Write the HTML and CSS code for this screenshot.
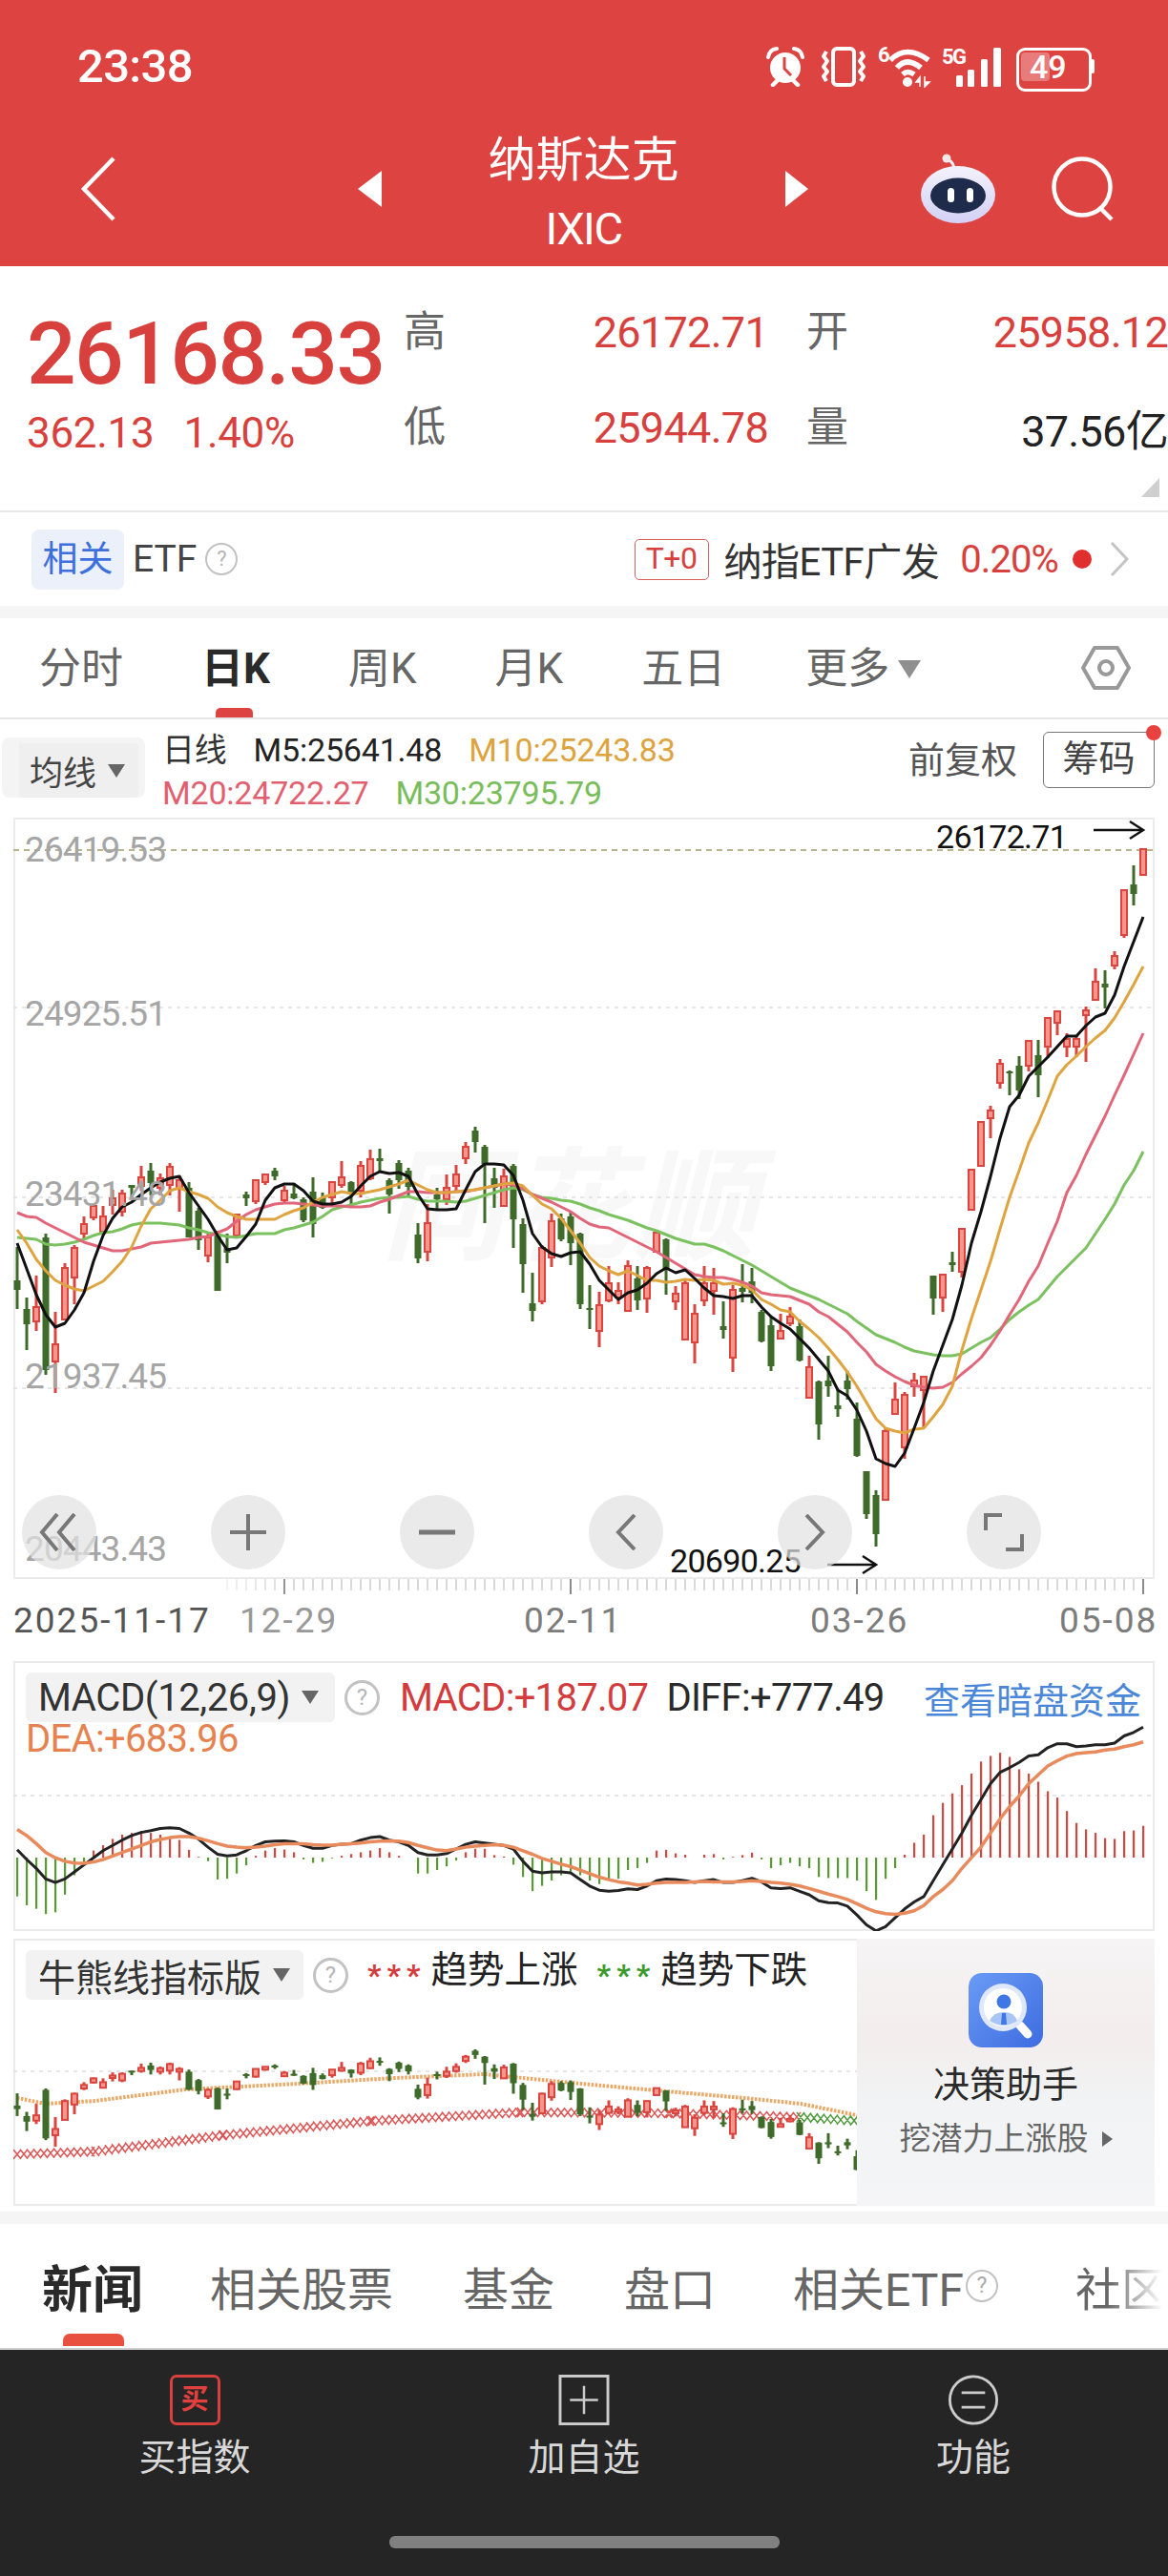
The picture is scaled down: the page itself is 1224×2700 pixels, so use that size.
FILE: index.html
```html
<!DOCTYPE html>
<html lang="zh">
<head>
    <meta charset="UTF-8">
    <meta name="viewport" content="width=device-width, initial-scale=1.0">
    <title>纳斯达克 IXIC</title>
    <link rel="stylesheet" href="styles.css">
</head>
<body>

<!-- 顶部红色区域 -->
<header class="top">
    <div class="status">
        <span class="time">23:38</span>
        <div class="status-icons">
            <svg class="ic-alarm" width="40" height="42" viewBox="0 0 40 42">
                <circle cx="20" cy="22" r="16" fill="#fff"/>
                <path d="M19 11v12l7 7" fill="none" stroke="#dd4441" stroke-width="3"/>
                <path d="M2 11 Q3 3 11 2 M38 11 Q37 3 29 2" fill="none" stroke="#fff" stroke-width="4" stroke-linecap="round"/>
                <path d="M7 40l5-5M33 40l-5-5" stroke="#fff" stroke-width="4.5" stroke-linecap="round"/>
            </svg>
            <svg class="ic-vibrate" width="48" height="42" viewBox="0 0 48 42">
                <rect x="13" y="2" width="22" height="38" rx="4" fill="none" stroke="#fff" stroke-width="4"/>
                <path d="M6 5l-3 5 4 5-4 6 4 5-4 5 3 5M42 5l3 5-4 5 4 6-4 5 4 5-3 5" fill="none" stroke="#fff" stroke-width="4" stroke-linejoin="round"/>
            </svg>
            <svg class="ic-wifi" width="57" height="52" viewBox="0 -8 57 52">
                <text class="ic-small" x="0" y="17">6</text>
                <path d="M13 15 Q30 -2 53 15M20 23 Q30 11 45 23M26 30 Q31 25 38 30" fill="none" stroke="#fff" stroke-width="5.5"/>
                <circle cx="31" cy="38" r="5" fill="#fff"/>
                <path d="M44 43v-10l-4 5h4M49 32v11l5-5h-5" fill="#fff" stroke="#fff" stroke-width="1.5"/>
            </svg>
            <svg class="ic-signal" width="62" height="50" viewBox="0 -8 62 50">
                <text class="ic-small" x="0" y="18">5G</text>
                <rect x="15" y="30" width="7" height="12" rx="1.5" fill="#fff"/>
                <rect x="27" y="24" width="7" height="18" rx="1.5" fill="#fff"/>
                <rect x="41" y="13" width="7" height="29" rx="1.5" fill="#fff"/>
                <rect x="54" y="1" width="8" height="41" rx="1.5" fill="#fff"/>
            </svg>
            <div class="battery">
                <span class="battery-fill"></span>
                <span class="battery-num">49</span>
                <span class="battery-cap"></span>
            </div>
        </div>
    </div>
    <nav class="nav">
        <div class="nav-left">
            <svg width="38" height="68" viewBox="0 0 38 68"><path d="M35 2L4 34l31 32" fill="none" stroke="#fff" stroke-width="4.5"/></svg>
            <span class="tri-left"></span>
        </div>
        <div class="nav-title">
            <div class="title-cn">纳斯达克</div>
            <div class="title-en">IXIC</div>
        </div>
        <div class="nav-right">
            <span class="tri-right"></span>
            <svg class="robot" width="80" height="74" viewBox="0 0 80 74">
                <defs>
                    <linearGradient id="robotHead" x1="0" y1="0" x2="0" y2="1">
                        <stop offset="0" stop-color="#f3f2fb"/>
                        <stop offset="1" stop-color="#d3d0f5"/>
                    </linearGradient>
                </defs>
                <path d="M36 15 Q34 6 26 6" fill="none" stroke="#eeeeff" stroke-width="3"/>
                <circle cx="28" cy="5" r="4.5" fill="#f4e9e9"/>
                <ellipse cx="40" cy="43" rx="39" ry="30" fill="url(#robotHead)"/>
                <ellipse cx="40" cy="44" rx="29" ry="18.5" fill="#1f2b4b"/>
                <rect x="29" y="36" width="7" height="15" rx="3.5" fill="#fff"/>
                <rect x="49" y="36" width="7" height="15" rx="3.5" fill="#fff"/>
            </svg>
            <svg class="search" width="68" height="68" viewBox="0 0 68 68"><circle cx="33" cy="32" r="29.5" fill="none" stroke="#fff" stroke-width="4.5"/><path d="M52 54l12 12" stroke="#fff" stroke-width="4.5"/></svg>
        </div>
    </nav>
</header>

<!-- 报价 -->
<section class="quote">
    <div class="quote-main">
        <div class="price">26168.33</div>
        <div class="change"><span>362.13</span><span>1.40%</span></div>
    </div>
    <div class="quote-grid">
        <span class="q-label">高</span><span class="q-val">26172.71</span>
        <span class="q-label q-label-2">开</span><span class="q-val">25958.12</span>
        <span class="q-label">低</span><span class="q-val">25944.78</span>
        <span class="q-label q-label-2">量</span><span class="q-val q-dark">37.56亿</span>
    </div>
    <span class="corner"></span>
</section>

<section class="etf">
    <span class="etf-chip">相关</span>
    <span class="etf-name">ETF</span>
    <span class="help help-etf">?</span>
    <span class="etf-right">
        <span class="t0">T+0</span>
        <span class="etf-fund">纳指ETF广发</span>
        <span class="etf-pct">0.20%</span>
        <span class="etf-dot"></span>
        <svg width="20" height="36" viewBox="0 0 20 36"><path d="M2 1l16 17L2 35" fill="none" stroke="#c4c4c4" stroke-width="3"/></svg>
    </span>
</section>

<div class="gap"></div>

<!-- 周期切换 -->
<section class="periods">
    <span>分时</span>
    <span class="period-on">日K</span>
    <span>周K</span>
    <span>月K</span>
    <span>五日</span>
    <span class="period-more">更多<i class="tri-down"></i></span>
    <svg class="gear" width="52" height="48" viewBox="0 0 52 48">
        <path d="M14 3h24l12 21-12 21H14L2 24z" fill="none" stroke="#999" stroke-width="4" stroke-linejoin="round"/>
        <circle cx="26" cy="24" r="7" fill="none" stroke="#999" stroke-width="4"/>
    </svg>
</section>

<section class="legend">
    <div class="ma-chip"><span class="ma-inner">均线<i class="tri-down tri-sm"></i></span></div>
    <div class="ma-vals">
        <div class="ma-row">
            <span class="ma-day">日线</span>
            <span class="c-m5">M5:25641.48</span>
            <span class="c-m10">M10:25243.83</span>
        </div>
        <div class="ma-row">
            <span class="c-m20">M20:24722.27</span>
            <span class="c-m30">M30:23795.79</span>
        </div>
    </div>
    <span class="fq">前复权</span>
    <span class="chips-btn">筹码<i class="chips-dot"></i></span>
</section>

<!-- K线 -->
<section class="kline-wrap">
    <svg id="kline" class="chart-svg" width="1224" height="884" viewBox="0 857 1224 884"></svg>
    <div class="chart-tools">
        <span class="tool"><svg width="42" height="40" viewBox="0 0 42 40"><path d="M19 1L3 20l16 19M37 1L21 20l16 19" fill="none" stroke="#777" stroke-width="4"/></svg></span>
        <span class="tool"><svg width="38" height="38" viewBox="0 0 38 38"><path d="M0 19h38M19 0v38" stroke="#777" stroke-width="4"/></svg></span>
        <span class="tool"><svg width="38" height="6" viewBox="0 0 38 6"><path d="M0 3h38" stroke="#777" stroke-width="5"/></svg></span>
        <span class="tool"><svg width="22" height="38" viewBox="0 0 22 38"><path d="M20 1L3 19l17 18" fill="none" stroke="#777" stroke-width="4"/></svg></span>
        <span class="tool"><svg width="22" height="38" viewBox="0 0 22 38"><path d="M2 1l17 18L2 37" fill="none" stroke="#777" stroke-width="4"/></svg></span>
        <span class="tool"><svg width="42" height="40" viewBox="0 0 42 40"><path d="M2 18V2h17M40 22v16H23" fill="none" stroke="#777" stroke-width="4"/></svg></span>
    </div>
</section>

<!-- MACD -->
<section class="macd">
    <svg id="macd" class="chart-svg" width="1196" height="283" viewBox="14 1741 1196 283"></svg>
    <div class="macd-head">
        <div class="macd-line">
            <span class="ind-chip ind-macd">MACD(12,26,9)<i class="tri-down tri-sm"></i></span>
            <span class="help help-ind">?</span>
            <span class="macd-red">MACD:+187.07</span>
            <span class="macd-dark">DIFF:+777.49</span>
            <span class="macd-link">查看暗盘资金</span>
        </div>
        <div class="macd-dea">DEA:+683.96</div>
    </div>
</section>

<!-- 牛熊线 -->
<section class="bull">
    <div class="bull-chart">
        <svg id="bull" class="chart-svg" width="884" height="280" viewBox="14 2032 884 280"></svg>
        <div class="bull-head">
            <span class="ind-chip ind-bull">牛熊线指标版<i class="tri-down tri-sm"></i></span>
            <span class="help help-ind">?</span>
            <span class="stars star-red">***</span><span class="bull-txt">趋势上涨</span>
            <span class="stars star-green">***</span><span class="bull-txt">趋势下跌</span>
        </div>
    </div>
    <aside class="promo">
        <svg width="78" height="78" viewBox="0 0 78 78">
            <defs>
                <linearGradient id="promoBg" x1="0" y1="0" x2="1" y2="1">
                    <stop offset="0" stop-color="#6a9bf5"/>
                    <stop offset="1" stop-color="#3d6ce0"/>
                </linearGradient>
            </defs>
            <rect width="78" height="78" rx="14" fill="url(#promoBg)"/>
            <path d="M54 55l8 9" stroke="#fff" stroke-width="9" stroke-linecap="round"/>
            <circle cx="36" cy="36" r="25" fill="#dfe8fb"/>
            <circle cx="36" cy="36" r="20" fill="#fff"/>
            <circle cx="37" cy="30" r="7.5" fill="#3f78e6"/>
            <path d="M22 50 Q26 41 37 41 Q48 41 51 50 Q37 60 22 50z" fill="#a9c5f4"/>
            <path d="M35 42h4l1 12h-6z" fill="#3f78e6"/>
        </svg>
        <div class="promo-title">决策助手</div>
        <div class="promo-sub">挖潜力上涨股<i class="tri-right-sm"></i></div>
    </aside>
</section>

<div class="gap gap-news"></div>

<section class="news-tabs">
    <span class="news-on">新闻</span>
    <span>相关股票</span>
    <span>基金</span>
    <span>盘口</span>
    <span class="news-etf">相关ETF<i class="help help-news">?</i></span>
    <span class="news-more">社区</span>
</section>

<footer class="bottom">
    <div class="bottom-items">
        <div class="bottom-item">
            <span class="buy-ic">买</span>
            <span class="bottom-label">买指数</span>
        </div>
        <div class="bottom-item">
            <svg width="54" height="54" viewBox="0 0 54 54"><rect x="1.5" y="1.5" width="51" height="51" fill="none" stroke="#ccc" stroke-width="3"/><path d="M12 27h30M27 12v30" stroke="#ccc" stroke-width="2.5"/></svg>
            <span class="bottom-label">加自选</span>
        </div>
        <div class="bottom-item">
            <svg width="56" height="56" viewBox="0 0 56 56"><circle cx="28" cy="28" r="26" fill="none" stroke="#ccc" stroke-width="3"/><path d="M15 20h26M15 36h26" stroke="#ccc" stroke-width="3"/></svg>
            <span class="bottom-label">功能</span>
        </div>
    </div>
    <div class="home-bar"></div>
</footer>

<script src="chart.js"></script>
</body>
</html>
```

FILE: styles.css
```css
* {
    box-sizing: border-box;
}

body {
    margin: 0;
    width: 1224px;
    height: 2700px;
    overflow: hidden;
    background-color: #fff;
    font-family: Roboto, "Noto Sans CJK SC", sans-serif;
    color: #222;
}

i {
    font-style: normal;
}

/* 顶部 */
.top {
    height: 279px;
    background-color: #dd4441;
    color: #fff;
}

.status {
    height: 120px;
    padding: 48px 77px 0 81px;
    display: flex;
    justify-content: space-between;
}

.time {
    font-size: 49px;
    font-weight: 500;
    line-height: 44px;
    letter-spacing: -0.7px;
}

.status-icons {
    display: flex;
    align-items: center;
    height: 44px;
}

.ic-vibrate {
    margin-left: 17px;
}

.ic-wifi {
    margin-left: 12px;
    margin-top: -8px;
}

.ic-signal {
    margin-left: 10px;
    margin-top: -8px;
}

.ic-small {
    font-size: 22px;
    font-weight: 700;
    fill: #fff;
    letter-spacing: -1.5px;
}

.battery {
    position: relative;
    width: 82px;
    height: 40px;
    margin-left: 16px;
}

.battery::before {
    content: "";
    position: absolute;
    left: 0;
    top: 0;
    width: 73px;
    height: 40px;
    border: 3px solid #fff;
    border-radius: 9px;
}

.battery-fill {
    position: absolute;
    left: 5px;
    top: 5px;
    width: 30px;
    height: 30px;
    border-radius: 4px;
    background-color: rgba(255, 255, 255, 0.3);
}

.battery-num {
    position: absolute;
    left: 14px;
    top: 0;
    font-size: 34px;
    line-height: 40px;
    font-weight: 500;
}

.battery-cap {
    position: absolute;
    right: 0;
    top: 12px;
    width: 4px;
    height: 15px;
    border-radius: 2px;
    background-color: #fff;
}

.nav {
    display: flex;
    height: 159px;
}

.nav-left {
    display: flex;
    align-items: center;
    justify-content: space-between;
    width: 400px;
    padding-left: 84px;
    padding-bottom: 3px;
}

.nav-title {
    width: 423px;
    text-align: center;
}

.title-cn {
    font-size: 50px;
    line-height: 50px;
    margin-top: 23px;
}

.title-en {
    font-size: 47px;
    line-height: 44px;
    margin-top: 25px;
    letter-spacing: -1.5px;
}

.nav-right {
    display: flex;
    align-items: center;
    padding-bottom: 3px;
}

.robot {
    margin-left: 117px;
}

.search {
    margin-left: 57px;
}

.tri-left {
    width: 0;
    height: 0;
    border-style: solid;
    border-width: 19px 25px 19px 0;
    border-color: transparent #fff transparent transparent;
}

.tri-right {
    width: 0;
    height: 0;
    border-style: solid;
    border-width: 19px 0 19px 24px;
    border-color: transparent transparent transparent #fff;
}

/* 报价 */
.quote {
    position: relative;
    display: flex;
    height: 258px;
    padding: 19px 0 0 28px;
    border-bottom: 2px solid #e9e9e9;
}

.quote-main {
    width: 395px;
    color: #d8403d;
}

.price {
    font-size: 91px;
    font-weight: 500;
    line-height: 100px;
    letter-spacing: -1.6px;
    margin-top: 23px;
}

.change {
    display: flex;
    gap: 31px;
    margin-top: 10px;
    font-size: 44px;
    line-height: 46px;
    letter-spacing: -0.3px;
}

.quote-grid {
    flex: 1;
    display: grid;
    grid-template-columns: 45px 337px 90px 1fr;
    grid-auto-rows: 100px;
    align-items: center;
}

.q-label {
    font-size: 44px;
    line-height: 50px;
    color: #666;
}

.q-label-2 {
    margin-left: 40px;
}

.q-val {
    font-size: 45px;
    text-align: right;
    letter-spacing: -0.7px;
    color: #d8403d;
}

.q-dark {
    color: #222;
}

.corner {
    position: absolute;
    right: 9px;
    bottom: 14px;
    width: 0;
    height: 0;
    border-style: solid;
    border-width: 0 0 20px 19px;
    border-color: transparent transparent #cfcfcf transparent;
}

/* ETF */
.etf {
    display: flex;
    align-items: center;
    height: 98px;
    padding: 0 41px 0 33px;
}

.etf-chip {
    width: 97px;
    height: 63px;
    border-radius: 8px;
    background-color: #ebf0fb;
    color: #3d6fdd;
    font-size: 37px;
    line-height: 63px;
    text-align: center;
}

.etf-name {
    margin-left: 9px;
    font-size: 39px;
    color: #444;
}

.help {
    display: inline-block;
    border-radius: 50%;
    border: 2.5px solid #c2c2c2;
    color: #b5b5b5;
    text-align: center;
    font-style: normal;
}

.help-etf {
    width: 34px;
    height: 34px;
    margin-left: 9px;
    font-size: 22px;
    line-height: 29px;
}

.etf-right {
    margin-left: auto;
    display: flex;
    align-items: center;
}

.t0 {
    width: 78px;
    height: 43px;
    border: 1.5px solid #d8605c;
    border-radius: 5px;
    color: #d8403d;
    font-size: 32px;
    line-height: 39px;
    text-align: center;
    letter-spacing: -0.5px;
}

.etf-fund {
    margin-left: 16px;
    font-size: 40px;
    color: #333;
    letter-spacing: -0.5px;
}

.etf-pct {
    margin-left: 22px;
    font-size: 40px;
    color: #d8403d;
    letter-spacing: -0.9px;
}

.etf-dot {
    width: 20px;
    height: 20px;
    margin-left: 15px;
    border-radius: 50%;
    background-color: #e0302e;
}

.etf-right svg {
    margin-left: 19px;
}

.gap {
    height: 13px;
    background-color: #f5f5f5;
}

/* 周期 */
.periods {
    position: relative;
    display: flex;
    gap: 82px;
    height: 106px;
    padding: 28px 0 0 41px;
    border-bottom: 2px solid #e6e6e6;
    font-size: 44px;
    line-height: 50px;
    color: #666;
}

.period-on {
    position: relative;
    font-weight: 700;
    color: #2a2a2a;
}

.period-on::after {
    content: "";
    position: absolute;
    left: 15px;
    top: 66px;
    width: 39px;
    height: 10px;
    border-radius: 5px 5px 0 0;
    background-color: #dd4441;
}

.period-more {
    display: flex;
    align-items: center;
    height: 50px;
    margin-left: 2px;
}

.tri-down {
    display: inline-block;
    width: 0;
    height: 0;
    margin-left: 9px;
    border-style: solid;
    border-width: 19px 12px 0 12px;
    border-color: #8f8f8f transparent transparent transparent;
}

.tri-sm {
    border-width: 14px 9px 0 9px;
    border-top-color: #666;
}

.gear {
    position: absolute;
    left: 1133px;
    top: 28px;
}

/* 均线说明 */
.legend {
    display: flex;
    height: 103px;
    padding-right: 14px;
}

.ma-chip {
    width: 150px;
    height: 63px;
    margin: 19px 0 0 2px;
    padding: 6px 7px 0 18px;
    border-radius: 8px;
    background-color: #f4f4f4;
}

.ma-inner {
    display: flex;
    align-items: center;
    height: 57px;
    padding-left: 11px;
    border-radius: 4px;
    background-color: #efefef;
    font-size: 35px;
    white-space: nowrap;
    color: #444;
}

.ma-inner .tri-sm {
    margin-left: 12px;
}

.ma-vals {
    margin: 10px 0 0 18px;
    font-size: 34px;
    line-height: 45px;
    letter-spacing: -0.2px;
}

.ma-row {
    display: flex;
    gap: 28px;
}

.ma-day {
    color: #333;
}

.c-m5 {
    color: #222;
}

.c-m10 {
    color: #dda33e;
}

.c-m20 {
    color: #e25f70;
}

.c-m30 {
    color: #79bd5b;
}

.fq {
    margin: 18px 0 0 auto;
    font-size: 38px;
    line-height: 50px;
    color: #555;
}

.chips-btn {
    position: relative;
    width: 117px;
    height: 59px;
    margin: 13px 0 0 27px;
    border: 1.5px solid #777;
    border-radius: 6px;
    font-size: 38px;
    line-height: 54px;
    text-align: center;
    color: #444;
}

.chips-dot {
    position: absolute;
    right: -8px;
    top: -8px;
    width: 16px;
    height: 16px;
    border-radius: 50%;
    background-color: #e8413f;
}

/* 图表 */
.chart-svg {
    display: block;
}

.kline-wrap {
    position: relative;
    height: 884px;
}

.chart-tools {
    position: absolute;
    left: 23px;
    top: 710px;
    display: flex;
    gap: 120px;
}

.tool {
    display: flex;
    align-items: center;
    justify-content: center;
    width: 78px;
    height: 78px;
    border-radius: 50%;
    background-color: rgba(226, 226, 226, 0.72);
}

.axis-price {
    font-size: 37px;
    letter-spacing: -0.9px;
    fill: #a5a5a5;
}

.axis-mark {
    font-size: 34px;
    letter-spacing: -0.7px;
    fill: #111;
}

.axis-date {
    font-size: 37px;
    letter-spacing: 2px;
    fill: #7c7c7c;
}

.axis-date-first {
    fill: #555;
}

.axis-date-soft {
    fill: #999;
}

.watermark {
    font-size: 128px;
    font-weight: 700;
    font-style: italic;
    letter-spacing: 4px;
    fill: #f8f8f8;
}

.macd {
    position: relative;
    width: 1196px;
    height: 283px;
    margin-left: 14px;
}

.macd-head {
    position: absolute;
    left: 13px;
    top: 12px;
    right: 14px;
}

.macd-line {
    display: flex;
    align-items: center;
    height: 52px;
}

.ind-chip {
    display: flex;
    align-items: center;
    height: 52px;
    border-radius: 6px;
    background-color: #f2f2f2;
    font-size: 39px;
    color: #333;
}

.ind-macd {
    width: 324px;
    padding-left: 13px;
    font-size: 40px;
    letter-spacing: -0.4px;
    white-space: nowrap;
}

.ind-chip .tri-sm {
    margin-left: 12px;
}

.help-ind {
    width: 37px;
    height: 37px;
    margin-left: 10px;
    border-width: 3px;
    font-size: 24px;
    line-height: 31px;
}

.macd-red {
    margin-left: 21px;
    font-size: 40px;
    letter-spacing: -0.7px;
    color: #d33c3c;
}

.macd-dark {
    margin-left: 19px;
    font-size: 40px;
    letter-spacing: -0.7px;
    color: #2a2a2a;
}

.macd-link {
    margin-left: auto;
    font-size: 38px;
    color: #4a87d8;
    white-space: nowrap;
}

.macd-dea {
    margin-top: -3px;
    font-size: 40px;
    line-height: 42px;
    letter-spacing: -0.7px;
    color: #e5824f;
}

.bull {
    display: flex;
    width: 1196px;
    height: 280px;
    margin: 8px 0 0 14px;
}

.bull-chart {
    position: relative;
    width: 884px;
}

.bull-head {
    position: absolute;
    left: 13px;
    top: 12px;
    display: flex;
    align-items: center;
    height: 52px;
}

.ind-bull {
    width: 291px;
    padding-left: 13px;
    white-space: nowrap;
}

.stars {
    margin: 0 5px 0 20px;
    font-size: 32px;
    font-weight: 700;
    letter-spacing: 6px;
    line-height: 30px;
}

.star-red {
    color: #d33c3c;
}

.star-green {
    color: #3c9a2c;
}

.bull-txt {
    font-size: 38.5px;
    line-height: 52px;
    margin-top: -10px;
}

.promo {
    flex: 1;
    display: flex;
    flex-direction: column;
    align-items: center;
    padding-top: 36px;
    background: linear-gradient(#f6f4f5, #f3eded 38%, #f1f3f4 62%, #f5f5f8);
}

.promo-title {
    margin-top: 16px;
    font-size: 38px;
    line-height: 46px;
    color: #2a2a2a;
}

.promo-sub {
    display: flex;
    align-items: center;
    margin-top: 12px;
    font-size: 33px;
    line-height: 44px;
    color: #666;
}

.tri-right-sm {
    width: 0;
    height: 0;
    margin-left: 14px;
    border-style: solid;
    border-width: 8px 0 8px 11px;
    border-color: transparent transparent transparent #666;
}

.gap-news {
    margin-top: 6px;
}

/* 新闻标签 */
.news-tabs {
    display: flex;
    align-items: center;
    gap: 73px;
    height: 130px;
    padding: 0 0 0 44px;
    overflow: hidden;
    font-size: 48px;
    color: #666;
    white-space: nowrap;
}

.news-on {
    position: relative;
    margin-right: -3px;
    font-size: 53px;
    font-weight: 700;
    color: #2a2a2a;
}

.news-on::after {
    content: "";
    position: absolute;
    left: 22px;
    top: 88px;
    width: 64px;
    height: 13px;
    border-radius: 7px 7px 0 0;
    background-color: #e8503f;
}

.news-etf {
    display: flex;
    align-items: center;
    margin-left: 8px;
}

.help-news {
    width: 34px;
    height: 34px;
    margin-left: 2px;
    font-size: 23px;
    line-height: 29px;
    color: #aaa;
}

.news-more {
    margin-left: 8px;
    -webkit-mask-image: linear-gradient(to right, #000 35%, transparent 95%);
    mask-image: linear-gradient(to right, #000 35%, transparent 95%);
}

/* 底部 */
.bottom {
    height: 239px;
    border-top: 2px solid #cfcfcf;
    background-color: #252525;
}

.bottom-items {
    display: grid;
    grid-template-columns: repeat(3, 408px);
    padding-top: 26px;
}

.bottom-item {
    display: flex;
    flex-direction: column;
    align-items: center;
    height: 110px;
}

.bottom-item svg,
.buy-ic {
    height: 55px;
}

.buy-ic {
    width: 53px;
    border: 3px solid #d8403d;
    border-radius: 7px;
    color: #e0413e;
    font-size: 29px;
    font-weight: 700;
    line-height: 47px;
    text-align: center;
}

.bottom-label {
    margin-top: 11px;
    font-size: 39px;
    line-height: 46px;
    color: #d8d8d8;
}

.home-bar {
    width: 409px;
    height: 13px;
    margin: 59px auto 0;
    border-radius: 6px;
    background-color: #808080;
}
```

FILE: chart.js
```js
// K线数据: [红=1 绿=0, 上影, 实体上, 实体下, 下影] (像素)
const candles = [
    [0,1307,1342,1352,1372],[0,1360,1372,1388,1415],[1,1337,1370,1385,1395],[0,1293,1297,1436,1441],[1,1375,1409,1427,1460],
    [1,1324,1329,1383,1383],[1,1305,1308,1339,1367],[1,1275,1283,1293,1298],[1,1262,1264,1276,1279],[1,1264,1275,1291,1292],
    [1,1247,1256,1263,1273],[1,1247,1251,1270,1275],[0,1242,1242,1245,1255],[1,1222,1234,1243,1248],[0,1219,1227,1240,1253],
    [1,1230,1235,1245,1253],[1,1219,1223,1242,1253],[1,1232,1237,1245,1270],[0,1239,1245,1297,1297],[0,1266,1269,1300,1310],
    [1,1293,1297,1316,1323],[0,1290,1293,1353,1353],[0,1293,1308,1313,1324],[1,1272,1273,1295,1297],[0,1249,1252,1256,1264],
    [1,1237,1237,1259,1262],[1,1230,1231,1239,1242],[0,1224,1227,1233,1237],[1,1243,1248,1258,1260],[0,1240,1251,1256,1257],
    [0,1255,1257,1279,1281],[0,1234,1249,1283,1297],[0,1250,1255,1266,1267],[1,1238,1239,1255,1262],[1,1217,1234,1242,1245],
    [0,1238,1239,1250,1262],[1,1217,1222,1248,1255],[1,1205,1215,1235,1237],[0,1204,1214,1217,1228],[0,1235,1237,1252,1272],
    [0,1216,1219,1237,1246],[0,1224,1227,1244,1253],[0,1282,1294,1319,1324],[1,1262,1282,1312,1322],[0,1245,1252,1257,1267],
    [1,1231,1245,1257,1263],[1,1221,1231,1243,1248],[1,1197,1202,1214,1220],[0,1181,1185,1197,1208],[0,1200,1202,1220,1282],
    [0,1224,1235,1245,1266],[1,1225,1233,1264,1264],[0,1220,1222,1278,1308],[0,1277,1283,1325,1355],[0,1334,1366,1374,1385],
    [1,1305,1308,1364,1367],[1,1272,1280,1318,1328],[0,1272,1277,1299,1301],[0,1270,1275,1303,1326],[0,1292,1293,1367,1372],
    [0,1347,1371,1373,1393],[1,1354,1368,1395,1412],[1,1327,1345,1363,1365],[1,1344,1353,1360,1367],[1,1321,1327,1374,1375],
    [0,1327,1340,1363,1373],[1,1327,1329,1361,1376],[1,1291,1292,1312,1313],[0,1298,1299,1330,1357],[1,1348,1356,1364,1373],
    [1,1340,1345,1404,1404],[1,1367,1377,1407,1429],[1,1327,1345,1363,1369],[1,1329,1345,1353,1378],[0,1364,1390,1394,1403],
    [1,1347,1352,1423,1438],[0,1325,1350,1354,1365],[0,1329,1343,1355,1366],[0,1373,1375,1406,1407],[0,1380,1389,1432,1437],
    [1,1377,1395,1403,1403],[1,1370,1380,1387,1390],[0,1383,1390,1426,1427],[1,1421,1433,1465,1465],[0,1447,1448,1493,1509],
    [0,1421,1447,1453,1464],[0,1457,1473,1477,1485],[0,1437,1447,1456,1467],[0,1470,1487,1526,1527],[0,1542,1542,1587,1592],
    [0,1562,1567,1608,1621],[1,1497,1500,1572,1572],[1,1449,1467,1482,1482],[1,1459,1462,1517,1529],[1,1439,1447,1453,1464],
    [1,1443,1443,1457,1497],[0,1337,1337,1361,1378],[1,1335,1336,1360,1375],[0,1312,1323,1326,1333],[1,1287,1288,1333,1339],
    [1,1226,1226,1268,1268],[1,1176,1176,1222,1222],[1,1159,1164,1172,1193],[1,1110,1115,1135,1141],[0,1122,1123,1125,1148],
    [0,1107,1117,1143,1152],[1,1090,1091,1117,1123],[0,1090,1106,1127,1150],[1,1066,1067,1097,1109],[1,1059,1060,1072,1085],
    [1,1083,1089,1097,1108],[1,1085,1089,1097,1108],[1,1055,1059,1064,1113],[1,1015,1029,1048,1049],[0,1017,1031,1035,1057],
    [1,997,1002,1012,1016],[1,933,933,980,983],[0,907,927,937,949],[1,889,890,917,918]
];

const m5 = [1303,1330,1357,1378,1391,1387,1373,1355,1322,1295,1277,1265,1260,1252,1245,1239,1235,1233,1250,1264,
    1278,1295,1310,1308,1296,1283,1258,1245,1241,1241,1248,1259,1262,1262,1260,1254,1243,1233,1228,1230,
    1229,1233,1252,1267,1268,1268,1267,1247,1228,1220,1220,1221,1232,1258,1293,1307,1314,1317,1313,1312,
    1325,1342,1352,1362,1355,1352,1345,1335,1329,1334,1331,1340,1350,1358,1359,1361,1358,1358,1370,1380,
    1387,1393,1403,1413,1425,1437,1457,1463,1478,1500,1529,1534,1537,1523,1497,1470,1437,1410,1383,1347,
    1303,1270,1233,1193,1160,1148,1128,1118,1108,1097,1086,1086,1075,1066,1062,1043,1013,987,961];
const m10 = [1289,1303,1320,1332,1342,1347,1351,1353,1348,1343,1333,1322,1307,1285,1267,1258,1248,1245,1249,1252,
    1256,1265,1271,1275,1278,1278,1278,1278,1273,1269,1266,1260,1255,1252,1249,1251,1251,1249,1247,1244,
    1241,1237,1242,1247,1250,1250,1249,1248,1247,1245,1243,1241,1240,1243,1253,1262,1267,1277,1290,1303,
    1318,1327,1332,1336,1332,1337,1342,1342,1344,1343,1341,1342,1341,1342,1346,1345,1347,1352,1362,1367,
    1373,1375,1385,1393,1402,1413,1425,1438,1453,1470,1487,1497,1500,1502,1498,1497,1485,1472,1453,1415,
    1382,1352,1322,1288,1255,1227,1198,1177,1153,1128,1116,1107,1097,1088,1080,1067,1050,1032,1013];
const m20 = [1271,1275,1276,1282,1287,1292,1297,1302,1305,1308,1311,1311,1309,1307,1303,1302,1301,1300,1299,1297,
    1296,1292,1288,1280,1273,1268,1265,1262,1261,1261,1262,1263,1264,1264,1264,1265,1265,1264,1260,1257,
    1253,1249,1249,1250,1250,1250,1249,1249,1247,1245,1243,1241,1242,1246,1252,1256,1260,1265,1270,1277,
    1283,1286,1287,1292,1297,1302,1307,1312,1318,1324,1330,1336,1338,1339,1339,1341,1344,1348,1355,1357,
    1358,1359,1363,1367,1375,1380,1388,1396,1407,1417,1430,1437,1443,1448,1452,1454,1455,1454,1449,1440,
    1432,1423,1410,1395,1378,1362,1343,1327,1303,1280,1250,1232,1210,1190,1170,1148,1127,1105,1083];
const m30 = [1297,1298,1299,1304,1305,1304,1302,1299,1295,1292,1291,1288,1284,1282,1282,1282,1283,1284,1287,1289,
    1292,1294,1296,1297,1295,1293,1293,1293,1289,1287,1284,1281,1275,1268,1265,1263,1260,1258,1256,1255,
    1255,1254,1257,1259,1259,1259,1260,1259,1256,1253,1250,1247,1245,1247,1252,1255,1256,1258,1259,1262,
    1266,1269,1273,1276,1279,1283,1287,1290,1294,1298,1301,1304,1304,1307,1311,1316,1321,1326,1332,1338,
    1344,1350,1354,1358,1362,1367,1372,1377,1385,1392,1399,1403,1407,1412,1416,1418,1420,1421,1421,1419,
    1413,1407,1402,1393,1383,1375,1368,1362,1350,1338,1328,1318,1308,1293,1278,1262,1242,1227,1207];

// MACD: 柱子以零轴为基准, DIFF/DEA 为面板内的相对高度
const hist = [-110,-135,-145,-160,-155,-105,-50,-15,20,35,53,65,70,75,70,65,55,50,22,2,
    -10,-62,-60,-45,-22,5,20,27,23,15,-5,-15,-12,-2,5,10,15,20,27,15,5,0,
    -45,-45,-35,-25,-8,15,25,25,7,3,-20,-55,-95,-80,-65,-50,-40,-50,-65,-75,-60,-60,-35,-30,-15,
    20,22,12,8,0,8,10,-5,2,7,14,-5,-30,-22,-15,-25,-30,-55,-58,-58,-58,-65,-95,-120,-60,-30,
    8,42,65,120,155,182,205,238,272,288,297,285,250,238,215,188,170,132,98,80,70,55,53,75,77,90];
const diff = [537,565,590,620,630,620,600,580,560,540,525,510,497,488,483,477,475,477,490,507,
    530,550,555,552,540,525,515,513,512,515,525,533,533,525,522,520,510,503,500,510,
    515,525,545,552,552,548,535,522,515,518,522,525,535,570,598,603,600,600,603,622,
    640,652,655,653,648,650,640,625,620,622,625,630,625,622,630,630,625,618,628,645,
    647,645,655,665,682,687,688,697,722,750,767,755,730,705,685,670,625,580,535,490,
    440,395,350,318,305,290,272,268,248,237,237,245,243,240,240,235,215,205,190];
const dea = [480,497,520,545,560,570,575,576,572,565,555,545,535,525,515,508,503,500,500,505,
    512,520,527,530,532,530,527,523,520,520,520,523,524,524,522,520,518,515,513,512,
    513,517,525,532,538,540,535,530,527,525,523,525,530,540,550,562,570,578,585,595,
    605,615,622,628,632,637,635,632,630,630,630,628,627,628,628,628,627,625,627,630,
    632,635,640,647,655,663,670,678,690,703,713,718,720,717,710,695,670,650,625,590,
    560,530,490,450,415,385,350,325,300,285,272,265,262,260,255,252,245,240,232];

const RED = "#d9453f";
const RED_IN = "#f5958c";
const GREEN = "#3e6b2a";

function candleX(i) {
    return 18 + i * 10;
}

function rect(x, y, w, h, fill, extra) {
    return `<rect x="${x}" y="${y}" width="${w}" height="${h}" fill="${fill}" ${extra || ""}/>`;
}

function line(x1, y1, x2, y2, stroke, w, extra) {
    return `<line x1="${x1}" y1="${y1}" x2="${x2}" y2="${y2}" stroke="${stroke}" stroke-width="${w}" ${extra || ""}/>`;
}

function polyline(points, stroke, w, extra) {
    return `<polyline points="${points.join(" ")}" fill="none" stroke="${stroke}" stroke-width="${w}" stroke-linejoin="round" ${extra || ""}/>`;
}

function seriesLine(values, stroke, w, toY) {
    let pts = values.map((v, i) => candleX(i) + "," + (toY ? toY(v) : v).toFixed(1));
    return polyline(pts, stroke, w);
}

function drawCandles(count, toY) {
    let out = "";
    for (let i = 0; i < count; i++) {
        let c = candles[i];
        let x = candleX(i);
        let top = toY(c[1]), bodyTop = toY(c[2]), bodyBot = toY(c[3]), bot = toY(c[4]);
        if (c[0] === 1) {
            out += line(x, top, x, bot, RED, 3);
            out += rect(x - 3, bodyTop, 6, Math.max(bodyBot - bodyTop, 2), RED_IN, `stroke="${RED}" stroke-width="2"`);
        } else {
            out += line(x, top, x, bot, GREEN, 3);
            out += rect(x - 3.5, bodyTop, 7, Math.max(bodyBot - bodyTop, 2), GREEN);
        }
    }
    return out;
}

function grid(y, x1, x2) {
    return line(x1, y, x2, y, "#dedede", 1.5, 'stroke-dasharray="4 5"');
}

function priceLabel(text, y) {
    return `<text class="axis-price" x="26" y="${y}">${text}</text>`;
}

function arrow(x1, x2, y) {
    return line(x1, y, x2, y, "#111", 2.5) +
        `<path d="M${x2 - 14} ${y - 9}L${x2} ${y}L${x2 - 14} ${y + 9}" fill="none" stroke="#111" stroke-width="2.5"/>`;
}

function drawKline() {
    let s = `<text class="watermark" x="400" y="1310">同花顺</text>`;
    s += `<rect x="15" y="858" width="1194" height="796" fill="none" stroke="#ebebeb" stroke-width="2"/>`;
    s += line(14, 891, 1210, 891, "#b8b48c", 2, 'stroke-dasharray="6 5"');
    [1056, 1255, 1455].forEach(y => s += grid(y, 14, 1210));
    s += drawCandles(candles.length, v => v);
    s += seriesLine(m30, "#7cc160", 3);
    s += seriesLine(m20, "#e2667a", 3);
    s += seriesLine(m10, "#dfa440", 3);
    s += seriesLine(m5, "#111", 3);
    s += priceLabel("26419.53", 903) + priceLabel("24925.51", 1075) + priceLabel("23431.48", 1264);
    s += priceLabel("21937.45", 1455) + priceLabel("20443.43", 1636);
    s += `<text class="axis-mark" x="981" y="889">26172.71</text>` + arrow(1146, 1198, 870);
    s += `<text class="axis-mark" x="702" y="1648">20690.25</text>` + arrow(867, 918, 1640);
    // 底部刻度
    for (let x = 238; x <= 1198; x += 10) {
        let major = (x - 298) % 300 === 0;
        let fade = x < 300 ? 0.3 + (x - 238) / 100 : 1;
        s += line(x, 1655, x, major ? 1671 : 1667, major ? "#8a8a8a" : "#cccccc", major ? 2 : 1.5, `opacity="${fade}"`);
    }
    s += `<text class="axis-date axis-date-first" x="14" y="1711">2025-11-17</text>`;
    s += `<text class="axis-date axis-date-soft" x="251" y="1711">12-29</text>`;
    s += `<text class="axis-date" x="549" y="1711">02-11</text>`;
    s += `<text class="axis-date" x="849" y="1711">03-26</text>`;
    s += `<text class="axis-date" x="1110" y="1711">05-08</text>`;
    document.getElementById("kline").innerHTML = s;
}

function drawMacd() {
    let zero = 1947;
    let toY = v => 1740 + v * 0.37;
    let s = `<rect x="15" y="1742" width="1194" height="281" fill="none" stroke="#ebebeb" stroke-width="2"/>`;
    s += grid(1882, 14, 1210);
    hist.forEach((v, i) => {
        let h = v * 0.37;
        if (v > 0) {
            s += rect(candleX(i) - 1, zero - h, 2.2, h, "#cf4a44");
        } else if (v < 0) {
            s += rect(candleX(i) - 1, zero, 2.2, -h, "#5a9a33");
        }
    });
    s += seriesLine(diff, "#222", 3, toY);
    s += seriesLine(dea, "#e88a5c", 3.5, toY);
    document.getElementById("macd").innerHTML = s;
}

function crossMarks(points, color) {
    // 沿折线每 7px 画一个叉
    let d = "";
    for (let p = 0; p < points.length - 1; p++) {
        let a = points[p], b = points[p + 1];
        for (let x = a[0]; x < b[0]; x += 7) {
            let y = a[1] + (b[1] - a[1]) * (x - a[0]) / (b[0] - a[0]);
            d += `M${x - 4} ${y - 5}L${x + 4} ${y + 5}M${x + 4} ${y - 5}L${x - 4} ${y + 5}`;
        }
    }
    return `<path d="${d}" fill="none" stroke="${color}" stroke-width="1.5"/>`;
}

function drawBull() {
    let s = `<path d="M898 2033H15V2311H898" fill="none" stroke="#ebebeb" stroke-width="2"/>`;
    s += grid(2171, 14, 898);
    let orange = [[18,2199],[48,2205],[100,2202],[195,2190],[312,2184],[414,2178],[507,2174],[609,2184],[687,2191],[780,2199],[839,2205],[898,2217]];
    s += polyline(orange.map(p => p.join(",")), "#eba765", 4, 'stroke-dasharray="2.5 1.5"');
    s += crossMarks([[18,2258],[100,2255],[234,2238],[390,2223],[546,2214],[702,2215],[839,2219]], "#dd5555");
    s += crossMarks([[839,2219],[898,2223]], "#4f9a3c");
    s += drawCandles(89, v => 2148 + (v - 1181) * 0.366);
    document.getElementById("bull").innerHTML = s;
}

drawKline();
drawMacd();
drawBull();
```
